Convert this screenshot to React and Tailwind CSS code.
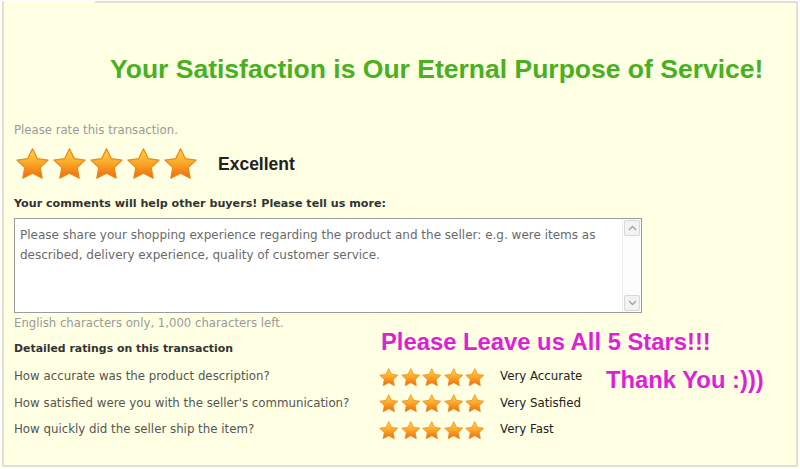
import React from "react";

const Star = ({ size }) => (
  <svg width={size} height={size} viewBox="0 0 24 24" className="shrink-0">
    <defs>
      <linearGradient id="starFill" x1="0" y1="0" x2="0" y2="1">
        <stop offset="0%" stopColor="#ffd84a" />
        <stop offset="45%" stopColor="#fbab2a" />
        <stop offset="100%" stopColor="#f06a0c" />
      </linearGradient>
    </defs>
    <path
      d="M12 1.8l3.1 6.4 7 .9-5.1 4.9 1.3 6.9L12 17.6l-6.3 3.3 1.3-6.9-5.1-4.9 7-.9z"
      fill="url(#starFill)"
      stroke="#e98a1c"
      strokeWidth="0.8"
      strokeLinejoin="round"
    />
  </svg>
);

const Stars = ({ size }) => (
  <div className="flex">
    {[0, 1, 2, 3, 4].map((i) => (
      <Star key={i} size={size} />
    ))}
  </div>
);

const questions = [
  ["How accurate was the product description?", "Very Accurate"],
  ["How satisfied were you with the seller's communication?", "Very Satisfied"],
  ["How quickly did the seller ship the item?", "Very Fast"],
];

export default function App() {
  return (
    <div className="w-[800px] h-[469px] bg-white pl-[2px] pt-[1px] font-['DejaVu_Sans',sans-serif]">
      <div className="w-[796px] h-[466px] bg-[#ffffe4] border-l-2 border-r-2 border-b-2 border-[#e2e0cf]">
        <div className="ml-[91px] border-t-2 border-[#e2e0cf]" />
        <h1 className="pl-[106px] pt-[50px] text-[26.5px] leading-[32px] font-bold text-[#49b021] font-['Liberation_Sans',sans-serif]">
          Your Satisfaction is Our Eternal Purpose of Service!
        </h1>

        <div className="pl-[10px]">
          <p className="mt-[37px] text-[11.7px] leading-[16px] text-[#9a9a9a]">
            Please rate this transaction.
          </p>
          <div className="mt-[8px] flex items-center">
            <Stars size={37} />
            <span className="ml-[19px] text-[17.5px] font-bold text-[#222] font-['Liberation_Sans',sans-serif]">
              Excellent
            </span>
          </div>
          <p className="mt-[13px] text-[11.15px] leading-[16px] font-bold text-[#333]">
            Your comments will help other buyers! Please tell us more:
          </p>
          <div className="mt-[6px] w-[628px] h-[95px] bg-white border border-[#9c9c9c] flex">
            <div className="flex-1 px-[5px] pt-[6px] text-[12px] leading-[20px] text-[#6a6a6a]">
              Please share your shopping experience regarding the product and the seller: e.g. were items as described, delivery experience, quality of customer service.
            </div>
            <div className="w-[19px] flex flex-col justify-between border-l border-[#eeeeee] bg-[#fdfdfd] p-[1px]">
              <div className="h-[16px] border border-[#d8d8d8] rounded-[2px] bg-[#f3f3f3] flex items-center justify-center">
                <svg width="9" height="6" viewBox="0 0 9 6">
                  <path d="M1 5l3.5-3.5L8 5" fill="none" stroke="#a0a0a0" strokeWidth="1.3" />
                </svg>
              </div>
              <div className="h-[16px] border border-[#d8d8d8] rounded-[2px] bg-[#f3f3f3] flex items-center justify-center">
                <svg width="9" height="6" viewBox="0 0 9 6">
                  <path d="M1 1l3.5 3.5L8 1" fill="none" stroke="#a0a0a0" strokeWidth="1.3" />
                </svg>
              </div>
            </div>
          </div>
          <p className="mt-[2px] text-[11.7px] leading-[16px] text-[#9a9a9a]">
            English characters only, 1,000 characters left.
          </p>

          <div className="grid grid-cols-[364px_122px_106px_1fr]">
            <p className="h-[33px] pt-[10px] text-[10.9px] leading-[16px] font-bold text-[#333]">
              Detailed ratings on this transaction
            </p>
            <p className="col-span-3 h-[33px] pl-[3px] text-[23.8px] leading-[22px] font-bold text-[#df1fd6] font-['Liberation_Sans',sans-serif]">
              Please Leave us All 5 Stars!!!
            </p>
            {questions.map(([q, a], i) => (
              <React.Fragment key={q}>
                <div className="h-[26.5px] flex items-center text-[11.8px] text-[#555]">{q}</div>
                <div className="h-[26.5px] flex items-center">
                  <Stars size={21.5} />
                </div>
                <div className="h-[26.5px] flex items-center text-[11.8px] text-[#222]">{a}</div>
                <div className="h-[26.5px] flex items-center">
                  {i === 0 && (
                    <span className="pt-[6px] text-[23.8px] font-bold text-[#df1fd6] font-['Liberation_Sans',sans-serif]">
                      Thank You :)))
                    </span>
                  )}
                </div>
              </React.Fragment>
            ))}
          </div>
        </div>
      </div>
    </div>
  );
}
